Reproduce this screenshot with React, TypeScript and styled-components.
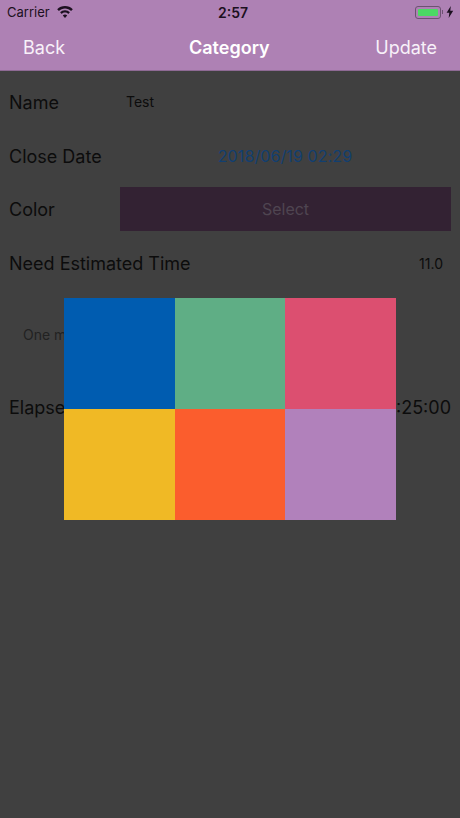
import React from 'react';
import styled, { createGlobalStyle } from 'styled-components';

const swatches = ['#005cb0', '#5fae85', '#dc4f70', '#f0b925', '#fb5d2d', '#b181bb'];

function App() {
  return (
    <Screen>
      <GlobalStyle />
      <NavArea>
        <StatusBar>
          <Carrier>
            Carrier
            <svg width="16" height="12" viewBox="0 0 16 12">
              <path
                fill="#1c1020"
                d="M8 0C5 0 2.300 1.200.2 3.200l1.700 1.800C3.500 3.400 5.600 2.500 8 2.500s4.500.9 6.100 2.500l1.700-1.800C13.700 1.200 11 0 8 0zm0 4.200c-1.900 0-3.600.7-4.900 2l1.700 1.700c.8-.8 2-1.300 3.200-1.300s2.400.5 3.200 1.300l1.700-1.700c-1.300-1.300-3-2-4.900-2zm0 4.300c-.9 0-1.600.3-2.200.9L8 12l2.200-2.600c-.6-.6-1.300-.9-2.200-.9z"
              />
            </svg>
          </Carrier>
          <Clock>2:57</Clock>
          <BatteryGroup>
            <Battery>
              <BatteryFill />
            </Battery>
            <BatteryCap />
            <svg width="8" height="12" viewBox="0 0 8 12">
              <path fill="#1c1020" d="M4.800 0 .6 6.800h2.700L2.700 12l4.500-7.200H4.300z" />
            </svg>
          </BatteryGroup>
        </StatusBar>
        <NavBar>
          <NavButton>Back</NavButton>
          <NavTitle>Category</NavTitle>
          <NavButton>Update</NavButton>
        </NavBar>
      </NavArea>

      <Content>
        <NameRow>
          <Label>Name</Label>
          <NameValue>Test</NameValue>
        </NameRow>
        <DateRow>
          <Label>Close Date</Label>
          <DateValue>2018/06/19 02:29</DateValue>
        </DateRow>
        <ColorRow>
          <Label>Color</Label>
          <SelectButton>Select</SelectButton>
        </ColorRow>
        <TimeRow>
          <Label>Need Estimated Time</Label>
          <TimeValue>11.0</TimeValue>
        </TimeRow>
        <Hint>One minute</Hint>
        <ElapsedRow>
          <Label>Elapsed Time</Label>
          <ElapsedValue>00:25:00</ElapsedValue>
        </ElapsedRow>

        <Palette>
          {swatches.map((color) => (
            <Swatch key={color} $color={color} />
          ))}
        </Palette>
      </Content>
    </Screen>
  );
}

export default App;

const GlobalStyle = createGlobalStyle`
  html, body {
    margin: 0;
    padding: 0;
    background: #404040;
  }
  * {
    box-sizing: border-box;
  }
`;

const Screen = styled.div`
  display: flex;
  flex-direction: column;
  width: 460px;
  height: 818px;
  overflow: hidden;
  font-family: 'Inter', 'Liberation Sans', sans-serif;
`;

const NavArea = styled.header`
  flex: none;
  height: 71px;
  background: #ae81b4;
  border-bottom: 1px solid #8e6a94;
`;

const StatusBar = styled.div`
  position: relative;
  display: flex;
  justify-content: space-between;
  align-items: center;
  height: 24px;
  padding: 0 6px 0 7px;
  color: #1c1020;
`;

const Carrier = styled.div`
  display: flex;
  align-items: center;
  gap: 7px;
  font-size: 13px;
`;

const Clock = styled.div`
  position: absolute;
  left: 218px;
  top: 4px;
  font-size: 14px;
  font-weight: 600;
  line-height: 17px;
`;

const BatteryGroup = styled.div`
  display: flex;
  align-items: center;
`;

const Battery = styled.div`
  width: 26px;
  height: 13px;
  padding: 2px;
  border: 1px solid #6d5272;
  border-radius: 3px;
`;

const BatteryFill = styled.div`
  height: 100%;
  background: #4cd964;
  border-radius: 1px;
`;

const BatteryCap = styled.div`
  width: 1px;
  height: 4px;
  margin: 0 3px 0 1px;
  background: #6d5272;
`;

const NavBar = styled.nav`
  display: flex;
  justify-content: space-between;
  align-items: center;
  height: 46px;
  padding: 0 23px;
`;

const NavButton = styled.div`
  color: #f8f1f9;
  font-size: 18px;
`;

const NavTitle = styled.div`
  position: absolute;
  left: 189px;
  color: #fff;
  font-size: 18px;
  font-weight: 600;
`;

const Content = styled.main`
  position: relative;
  flex: 1;
  display: flex;
  flex-direction: column;
  padding: 0 9px;
  background: #404040;
`;

const Row = styled.div`
  display: flex;
  align-items: center;
`;

const NameRow = styled(Row)`
  height: 63px;
`;

const DateRow = styled(Row)`
  height: 44px;
`;

const ColorRow = styled(Row)`
  height: 62px;
`;

const TimeRow = styled(Row)`
  justify-content: space-between;
  height: 46px;
  padding-right: 8px;
`;

const ElapsedRow = styled(Row)`
  justify-content: space-between;
  height: 40px;
  margin-top: 42px;
`;

const Label = styled.div`
  flex: none;
  width: 111px;
  color: #0c0c0c;
  font-size: 18px;
  white-space: nowrap;
`;

const NameValue = styled.div`
  margin: -3px 0 0 6px;
  color: #0c0c0c;
  font-size: 14px;
`;

const DateValue = styled.div`
  flex: 1;
  padding-right: 1px;
  color: #123f70;
  font-size: 16px;
  letter-spacing: 0.1px;
  text-align: center;
`;

const SelectButton = styled.div`
  flex: none;
  display: flex;
  justify-content: center;
  align-items: center;
  width: 331px;
  height: 44px;
  background: #332233;
  color: #4f4551;
  font-size: 16px;
`;

const TimeValue = styled.div`
  color: #0c0c0c;
  font-size: 14px;
`;

const Hint = styled.div`
  height: 20px;
  margin: 39px 0 0 14px;
  color: #222;
  font-size: 14px;
  line-height: 20px;
`;

const ElapsedValue = styled.div`
  color: #0c0c0c;
  font-size: 18px;
`;

const Palette = styled.div`
  position: absolute;
  left: 64px;
  top: 227px;
  display: grid;
  grid-template-columns: 111px 110px 111px;
  grid-template-rows: 111px 111px;
`;

const Swatch = styled.div<{ $color: string }>`
  background: ${({ $color }) => $color};
`;
